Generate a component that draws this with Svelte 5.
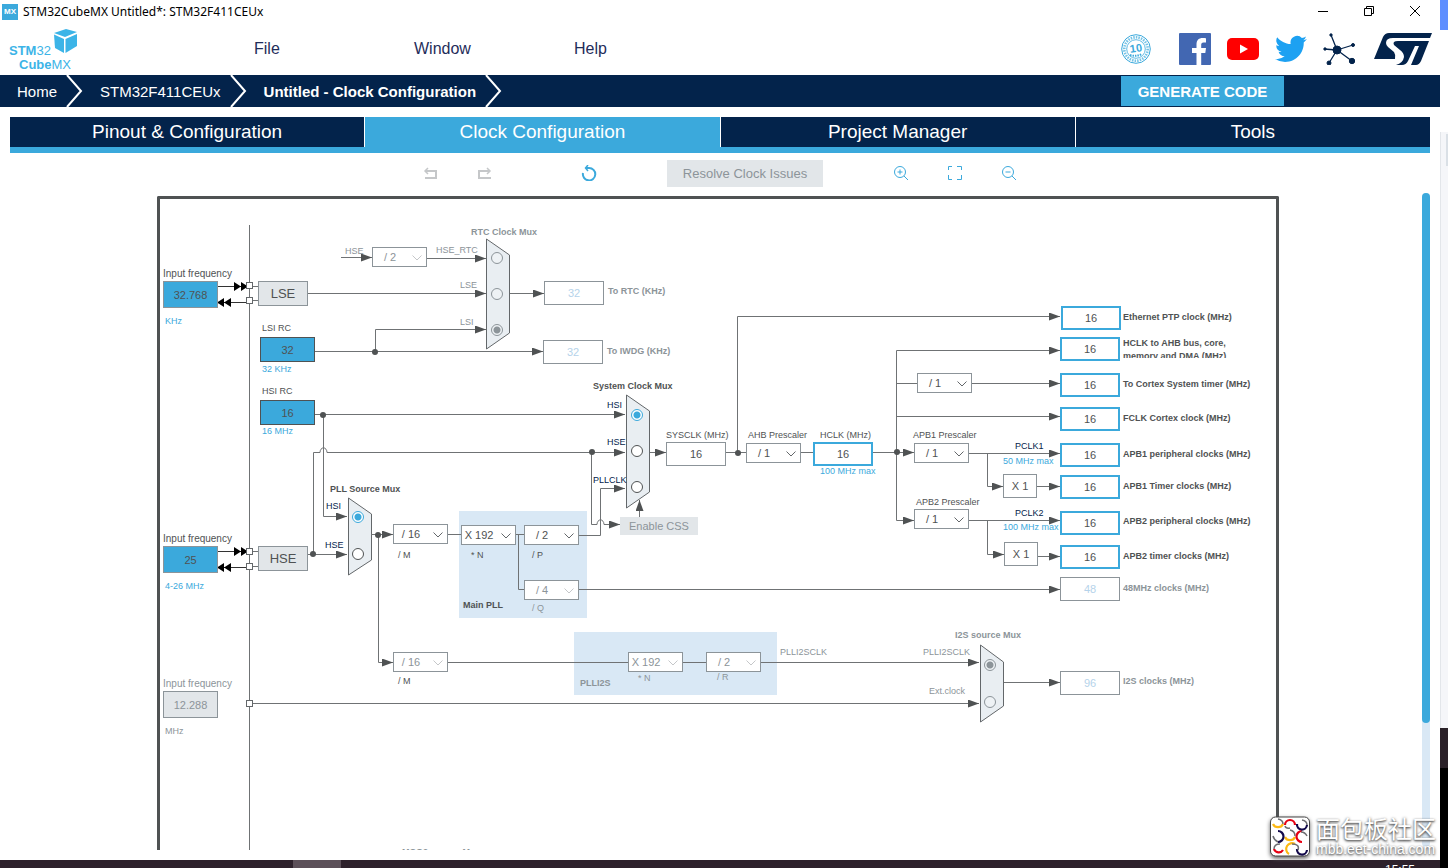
<script>
    let tabs = ["Pinout & Configuration", "Clock Configuration", "Project Manager", "Tools"]
    let activeTab = "Clock Configuration"

    // canvas coordinates of the board's top left corner
    const originX = 160
    const originY = 199

    function place(x, y) {
        return `left:${x - originX}px; top:${y - originY}px;`
    }

    let wires = [
        "M249.5 225V1000",
        "M427 258.5H486>", "M341 257.5H372>", "M308 293.5H486>", "M315 351.5H543>", "M375.5 352V329.5H486>",
        "M510 293.5H544>",
        "M315 414.5H625>", "M323.5 415V516.5H347>", "M308 554.5H347>",
        "M313.5 554V452.5H320a3 4 0 0 1 7 0H625>",
        "M591.5 452V524.5H597a3 4 0 0 1 7 0H620>",
        "M579 535.5H600.5V488.5H625>",
        "M650 452.5H666>", "M639.5 517V500>",
        "M726 452.5H746", "M737.5 452V316.5H1060>",
        "M801 452.5H813", "M873 452.5H914>",
        "M896.5 452V350.5H1060>", "M897 383.5H917", "M972 383.5H1060>", "M897 416.5H1060>", "M896.5 452V520.5H914>",
        "M969 453.5H1060>", "M987.5 453V486.5H1003>", "M1037 486.5H1060>",
        "M969 520.5H1060>", "M987.5 520V554.5H1004>", "M1038 556.5H1060>",
        "M371 534.5H393>", "M378.5 534V662.5H393>",
        "M448 534.5H461", "M516 534.5H524", "M518.5 534V589.5H524", "M579 589.5H1060>",
        "M448 662.5H628", "M683 662.5H706", "M761 662.5H979>", "M250 703.5H979>", "M1004 682.5H1060>",
        "M250 286.5H258", "M250 300.5H258", "M250 551.5H258", "M250 566.5H258"
    ]

    let dots = [[375, 352], [323, 415], [313, 554], [592, 452], [738, 453], [897, 452], [378, 535]]
    let ports = [285, 300, 551, 566, 703]

    let muxes = [
        {name: "RTC Clock Mux", points: "486.5,239 509.5,255 509.5,333 486.5,349", x: 497, off: true, checked: 2, inputs: [["HSE_RTC", 258], ["LSE", 294], ["LSI", 330]]},
        {name: "System Clock Mux", points: "626.5,395 649.5,411 649.5,492 626.5,508", x: 637, checked: 0, inputs: [["HSI", 415], ["HSE", 451], ["PLLCLK", 487]]},
        {name: "PLL Source Mux", points: "348.5,498 371.5,514 371.5,560 348.5,575", x: 358, checked: 0, inputs: [["HSI", 517], ["HSE", 554]]},
        {name: "I2S source Mux", points: "980.5,645 1003.5,662 1003.5,706 980.5,722", x: 990, off: true, checked: 0, inputs: [["PLLI2SCLK", 665], ["Ext.clock", 702]]}
    ]

    let fields = [
        {id: "lse-in", x: 163, y: 281, value: "32.768", kind: "source"},
        {id: "hse-in", x: 163, y: 546, value: "25", kind: "source"},
        {id: "i2s-in", x: 163, y: 691, value: "12.288", kind: "source off"},
        {id: "lsi-rc", x: 260, y: 337, value: "32", kind: "rc"},
        {id: "hsi-rc", x: 260, y: 400, value: "16", kind: "rc"},
        {id: "rtc", x: 544, y: 281, value: "32", kind: "off"},
        {id: "iwdg", x: 543, y: 340, value: "32", kind: "off"},
        {id: "sysclk", x: 666, y: 442, value: "16", kind: "plain"},
        {id: "hclk", x: 813, y: 442, value: "16", kind: "active"},
        {id: "ptp", x: 1061, y: 306, value: "16", kind: "active"},
        {id: "ahb", x: 1060, y: 337, value: "16", kind: "active"},
        {id: "cortex", x: 1060, y: 373, value: "16", kind: "active"},
        {id: "fclk", x: 1060, y: 407, value: "16", kind: "active"},
        {id: "apb1", x: 1060, y: 443, value: "16", kind: "active"},
        {id: "apb1-timer", x: 1060, y: 475, value: "16", kind: "active"},
        {id: "apb2", x: 1060, y: 511, value: "16", kind: "active"},
        {id: "apb2-timer", x: 1060, y: 545, value: "16", kind: "active"},
        {id: "usb", x: 1060, y: 577, value: "48", kind: "off"},
        {id: "i2s", x: 1060, y: 671, value: "96", kind: "off"}
    ]

    let selects = [
        {id: "rtc-div", x: 372, y: 247, value: "/ 2", off: true},
        {id: "pll-m", x: 393, y: 524, value: "/ 16"},
        {id: "i2s-m", x: 393, y: 652, value: "/ 16", off: true},
        {id: "pll-n", x: 461, y: 525, value: "X 192"},
        {id: "pll-p", x: 524, y: 525, value: "/ 2"},
        {id: "pll-q", x: 524, y: 580, value: "/ 4", off: true},
        {id: "i2s-n", x: 628, y: 652, value: "X 192", off: true},
        {id: "i2s-r", x: 706, y: 652, value: "/ 2", off: true},
        {id: "ahb-div", x: 746, y: 443, value: "/ 1"},
        {id: "cortex-div", x: 917, y: 373, value: "/ 1"},
        {id: "apb1-div", x: 914, y: 443, value: "/ 1"},
        {id: "apb2-div", x: 914, y: 509, value: "/ 1"}
    ]

    // y is the middle of the first line
    let labels = [
        {x: 163, y: 274, text: "Input frequency", for: "lse-in", kind: "big"},
        {x: 163, y: 539, text: "Input frequency", for: "hse-in", kind: "big"},
        {x: 163, y: 684, text: "Input frequency", for: "i2s-in", kind: "big gray"},
        {x: 165, y: 321, text: "KHz", kind: "blue"},
        {x: 165, y: 586, text: "4-26 MHz", kind: "blue"},
        {x: 165, y: 731, text: "MHz", kind: "gray"},
        {x: 262, y: 328, text: "LSI RC", for: "lsi-rc"},
        {x: 262, y: 369, text: "32 KHz", kind: "blue"},
        {x: 262, y: 391, text: "HSI RC", for: "hsi-rc"},
        {x: 262, y: 431, text: "16 MHz", kind: "blue"},
        {x: 345, y: 251, text: "HSE", for: "rtc-div", kind: "gray"},
        {x: 436, y: 250, text: "HSE_RTC", for: "mux0-0", kind: "gray"},
        {x: 460, y: 285, text: "LSE", for: "mux0-1", kind: "gray"},
        {x: 460, y: 322, text: "LSI", for: "mux0-2", kind: "gray"},
        {x: 471, y: 232, text: "RTC Clock Mux", kind: "bold gray"},
        {x: 608, y: 291, text: "To RTC (KHz)", for: "rtc", kind: "bold gray"},
        {x: 607, y: 351, text: "To IWDG (KHz)", for: "iwdg", kind: "bold gray"},
        {x: 593, y: 386, text: "System Clock Mux", kind: "bold"},
        {x: 607, y: 405, text: "HSI", for: "mux1-0", kind: "navy"},
        {x: 607, y: 442, text: "HSE", for: "mux1-1", kind: "navy"},
        {x: 593, y: 480, text: "PLLCLK", for: "mux1-2", kind: "navy"},
        {x: 666, y: 435, text: "SYSCLK (MHz)", for: "sysclk"},
        {x: 748, y: 435, text: "AHB Prescaler", for: "ahb-div"},
        {x: 820, y: 435, text: "HCLK (MHz)", for: "hclk"},
        {x: 820, y: 471, text: "100 MHz max", kind: "blue"},
        {x: 913, y: 435, text: "APB1 Prescaler", for: "apb1-div"},
        {x: 916, y: 502, text: "APB2 Prescaler", for: "apb2-div"},
        {x: 1015, y: 446, text: "PCLK1", kind: "navy"},
        {x: 1003, y: 461, text: "50 MHz max", kind: "blue"},
        {x: 1015, y: 513, text: "PCLK2", kind: "navy"},
        {x: 1003, y: 527, text: "100 MHz max", kind: "blue"},
        {x: 330, y: 489, text: "PLL Source Mux", kind: "bold"},
        {x: 326, y: 506, text: "HSI", for: "mux2-0", kind: "navy"},
        {x: 325, y: 545, text: "HSE", for: "mux2-1", kind: "navy"},
        {x: 398, y: 555, text: "/ M", for: "pll-m"},
        {x: 398, y: 681, text: "/ M", for: "i2s-m"},
        {x: 471, y: 555, text: "* N", for: "pll-n"},
        {x: 532, y: 555, text: "/ P", for: "pll-p"},
        {x: 532, y: 608, text: "/ Q", for: "pll-q", kind: "gray"},
        {x: 463, y: 605, text: "Main PLL", kind: "bold"},
        {x: 580, y: 683, text: "PLLI2S", kind: "bold gray"},
        {x: 638, y: 678, text: "* N", for: "i2s-n", kind: "gray"},
        {x: 717, y: 677, text: "/ R", for: "i2s-r", kind: "gray"},
        {x: 780, y: 652, text: "PLLI2SCLK", kind: "gray"},
        {x: 923, y: 652, text: "PLLI2SCLK", for: "mux3-0", kind: "gray"},
        {x: 929, y: 691, text: "Ext.clock", for: "mux3-1", kind: "gray"},
        {x: 955, y: 635, text: "I2S source Mux", kind: "bold gray"},
        {x: 1123, y: 317, text: "Ethernet PTP clock (MHz)", for: "ptp", kind: "bold"},
        {x: 1123, y: 343, text: "HCLK to AHB bus, core, memory and DMA (MHz)", for: "ahb", kind: "bold wrap"},
        {x: 1123, y: 384, text: "To Cortex System timer (MHz)", for: "cortex", kind: "bold"},
        {x: 1123, y: 418, text: "FCLK Cortex clock (MHz)", for: "fclk", kind: "bold"},
        {x: 1123, y: 454, text: "APB1 peripheral clocks (MHz)", for: "apb1", kind: "bold"},
        {x: 1123, y: 486, text: "APB1 Timer clocks (MHz)", for: "apb1-timer", kind: "bold"},
        {x: 1123, y: 521, text: "APB2 peripheral clocks (MHz)", for: "apb2", kind: "bold"},
        {x: 1123, y: 556, text: "APB2 timer clocks (MHz)", for: "apb2-timer", kind: "bold"},
        {x: 1123, y: 588, text: "48MHz clocks (MHz)", for: "usb", kind: "bold gray"},
        {x: 1123, y: 681, text: "I2S clocks (MHz)", for: "i2s", kind: "bold gray"},
        {x: 402, y: 852, text: "MCO2 source Mux", kind: "bold gray"}
    ]
</script>

<div class="desktop">
    <div class="window">
        <header>
            <div class="titlebar">
                <span class="mx">MX</span>
                <span class="title">STM32CubeMX Untitled*: STM32F411CEUx</span>
                <button class="win" aria-label="Minimize">
                    <svg width="12" height="12"><path d="M1 5.5H11" stroke="#000"/></svg>
                </button>
                <button class="win" aria-label="Restore">
                    <svg width="12" height="12" fill="none" stroke="#000"><path d="M1.5 2.5H8.5V9.5H1.5ZM3.5 2V0.5H10.5V7.5H9"/></svg>
                </button>
                <button class="win" aria-label="Close">
                    <svg width="12" height="12"><path d="M1 0L11 10M11 0L1 10" stroke="#000"/></svg>
                </button>
            </div>

            <div class="brand">
                <svg class="logo" width="72" height="44" viewBox="0 0 72 44">
                    <path d="M46 6L58 2L69 5L57 10Z" fill="#3cb4e7"/>
                    <path d="M46 7.500L56 12V26L47 21Z" fill="#3cb4e7"/>
                    <path d="M57.500 12L69 7V19L57.500 26Z" fill="#3cb4e7"/>
                    <text x="1" y="28"><tspan class="strong">STM</tspan>32</text>
                    <text x="11" y="42"><tspan class="strong">Cube</tspan>MX</text>
                </svg>
                <nav class="menu">
                    <button>File</button>
                    <button>Window</button>
                    <button>Help</button>
                </nav>
                <div class="social">
                    <a href="#years" class="years" aria-label="10 years">
                        <svg width="30" height="30" viewBox="0 0 30 30" fill="none" stroke="#3ba9dc">
                            <circle cx="15" cy="15" r="14.300"/>
                            <circle cx="15" cy="15" r="11.700" stroke-width="2.600" stroke-dasharray="1.500 1.100" opacity="0.700"/>
                            <circle cx="15" cy="15" r="9.300" stroke-width="0.800"/>
                            <text x="15" y="18" text-anchor="middle" class="ten" transform="rotate(-8 15 15)">10</text>
                            <path d="M9 21Q15 23 21 20" stroke-width="2" stroke-dasharray="1.500 1"/>
                        </svg>
                    </a>
                    <a href="#facebook" aria-label="Facebook">
                        <svg width="32" height="32" viewBox="0 0 32 32">
                            <rect width="32" height="32" rx="1" fill="#4267b2"/>
                            <path d="M17.500 32V20H13V15H17.500V11.500C17.500 7 20 5 23.500 5C25 5 26.500 5.100 27 5.200V9.500H24.500C22.700 9.500 22.200 10.500 22.200 12V15H27L26.300 20H22.200V32Z" fill="#fff"/>
                        </svg>
                    </a>
                    <a href="#youtube" aria-label="YouTube">
                        <svg width="32" height="32" viewBox="0 0 32 32">
                            <rect y="5" width="32" height="22" rx="5" fill="#f00"/>
                            <path d="M13 11.500L21 16L13 20.500Z" fill="#fff"/>
                        </svg>
                    </a>
                    <a href="#twitter" aria-label="Twitter">
                        <svg width="32" height="32" viewBox="0 0 24 24">
                            <path fill="#1da1f2" d="M23.950 4.570a10 10 0 0 1-2.820.780 4.960 4.960 0 0 0 2.160-2.730c-.950.560-2 .960-3.130 1.190a4.920 4.920 0 0 0-8.380 4.480C7.690 8.090 4.070 6.130 1.640 3.160a4.920 4.920 0 0 0 1.520 6.570 4.900 4.900 0 0 1-2.230-.610v.060a4.920 4.920 0 0 0 3.950 4.830 5 5 0 0 1-2.210.080 4.940 4.940 0 0 0 4.600 3.420A9.870 9.870 0 0 1 0 19.540a13.990 13.990 0 0 0 7.550 2.210c9.050 0 14-7.500 14-13.980 0-.210 0-.420-.010-.630a10 10 0 0 0 2.410-2.570z"/>
                        </svg>
                    </a>
                    <a href="#community" aria-label="Community">
                        <svg width="32" height="32" viewBox="0 0 32 32" fill="#03234b" stroke="#03234b">
                            <path d="M14 17L8 2M14 17L30 12M14 17L1 16M14 17L6 30M14 17L29 28" stroke-width="1.300"/>
                            <circle cx="14" cy="17" r="4"/>
                            <circle cx="8" cy="2" r="1.200"/>
                            <circle cx="30" cy="12" r="1.500"/>
                            <circle cx="2" cy="16" r="1.200"/>
                            <circle cx="6" cy="30" r="2"/>
                            <circle cx="29" cy="28" r="2.700"/>
                        </svg>
                    </a>
                    <a href="#st" class="st" aria-label="ST">
                        <svg width="58" height="32" viewBox="0 0 58 32" fill="#03234b">
                            <path d="M0 26L9 4Q11 0 15 0H58L56 5H19Q12 5 12 10Q12 12 14 14L20 19Q22 22 21 26Z"/>
                            <path d="M24 8H55L47 28Q45 32 42 32H37L45 13H41L34 28Q32 32 28 32H22Q29 30 30 24Q30 20 26 17L20 12Q18 8 24 8Z"/>
                        </svg>
                    </a>
                </div>
            </div>
        </header>

        <nav class="crumbs">
            <a href="#home">Home</a>
            <svg width="17" height="32"><path d="M1 0L15 16L1 32" fill="none" stroke="#fff" stroke-width="2"/></svg>
            <a href="#chip">STM32F411CEUx</a>
            <svg width="17" height="32"><path d="M1 0L15 16L1 32" fill="none" stroke="#fff" stroke-width="2"/></svg>
            <a href="#clock" class="current">Untitled - Clock Configuration</a>
            <svg width="17" height="32"><path d="M1 0L15 16L1 32" fill="none" stroke="#fff" stroke-width="2"/></svg>
            <button class="generate">GENERATE CODE</button>
        </nav>

        <div class="tabs">
            {#each tabs as tab}
                <button class:active={tab == activeTab} on:click={() => activeTab = tab}>{tab}</button>
            {/each}
        </div>

        <div class="toolbar">
            <div class="group">
                <button aria-label="Undo">
                    <svg width="16" height="16" fill="none" stroke="#c5c7c9" stroke-width="2"><path d="M2 6H13V13H2"/><path d="M5 3L2 6L5 9" stroke-width="1.500"/></svg>
                </button>
                <button aria-label="Redo">
                    <svg width="16" height="16" fill="none" stroke="#c5c7c9" stroke-width="2"><path d="M13 6H2V13H14"/><path d="M10 3L13 6L10 9" stroke-width="1.500"/></svg>
                </button>
            </div>
            <button aria-label="Reset">
                <svg width="16" height="16" fill="none" stroke="#3ba9dc" stroke-width="2"><path d="M2 8A6.200 6.200 0 1 0 8 3H5"/><path d="M7 0L4.500 3L7 6" stroke-width="1.500"/></svg>
            </button>
            <button class="resolve" disabled>Resolve Clock Issues</button>
            <div class="group">
                <button aria-label="Zoom in">
                    <svg width="16" height="16" fill="none" stroke="#3ba9dc"><circle cx="7" cy="7" r="5.500"/><path d="M11 11L15 15M4.500 7H9.500M7 4.500V9.500"/></svg>
                </button>
                <button aria-label="Fit to screen">
                    <svg width="16" height="16" fill="none" stroke="#3ba9dc"><path d="M1.500 5V1.500H5M10 1.500H14.500V5M14.500 10V14.500H10M5 14.500H1.500V10"/></svg>
                </button>
                <button aria-label="Zoom out">
                    <svg width="16" height="16" fill="none" stroke="#3ba9dc"><circle cx="7" cy="7" r="5.500"/><path d="M11 11L15 15M4.500 7H9.500"/></svg>
                </button>
            </div>
        </div>

        <div class="workspace">
            <div class="view">
                <div class="board">
                    <div class="area" style="{place(459, 511)} width:128px; height:107px;"></div>
                    <div class="area" style="{place(574, 632)} width:203px; height:63px;"></div>

                    <svg class="drawing" width="1116" height="801" viewBox="{originX} {originY} 1116 801">
                        <defs>
                            <marker id="arrow" markerUnits="userSpaceOnUse" markerWidth="11" markerHeight="8" refX="11" refY="4" orient="auto">
                                <path d="M0 0L11 4L0 8Z" fill="#4f5253"/>
                            </marker>
                        </defs>
                        {#each muxes as mux}
                            <polygon points={mux.points} fill="#e9eef2" stroke="#63676a"/>
                        {/each}
                        {#each wires as wire}
                            <path class="wire" d={wire.replace(">", "")} marker-end={wire.endsWith(">") ? "url(#arrow)" : null}/>
                        {/each}
                        {#each dots as [x, y]}
                            <circle cx={x} cy={y} r="3" fill="#4f5253"/>
                        {/each}
                        {#each [286, 551] as y}
                            <path d="M218 {y + 0.5}H249M218 {y + 16.5}H249" stroke="#333"/>
                            <path d="M234 {y - 4}L241 {y + 0.5}L234 {y + 5}ZM241 {y - 4}L248 {y + 0.5}L241 {y + 5}Z"/>
                            <path d="M231 {y + 12}L224 {y + 16.5}L231 {y + 21}ZM224 {y + 12}L217 {y + 16.5}L224 {y + 21}Z"/>
                        {/each}
                        {#each ports as y}
                            <rect x="246.500" y={y - 2.5} width="6" height="6" fill="#fff" stroke="#63676a"/>
                        {/each}
                    </svg>

                    {#each fields as field}
                        <input id={field.id} class="field {field.kind}" style={place(field.x, field.y)} value={field.value} disabled={field.kind.includes("off")}>
                    {/each}

                    {#each selects as select}
                        <div class="select" class:off={select.off} style={place(select.x, select.y)}>
                            <select id={select.id} aria-label={select.id} disabled={select.off}>
                                <option>{select.value}</option>
                            </select>
                            <svg width="10" height="6" fill="none"><path d="M0.500 0.500L5 5L9.500 0.500"/></svg>
                        </div>
                    {/each}

                    {#each muxes as mux, m}
                        {#each mux.inputs as [name, y], i}
                            <input type="radio" id="mux{m}-{i}" name={mux.name} aria-label={name} checked={i == mux.checked} disabled={mux.off} style={place(mux.x - 6, y - 6)}>
                        {/each}
                    {/each}

                    {#each labels as label}
                        {#if label.for}
                            <label for={label.for} class="label {label.kind}" style={place(label.x, label.y - 6)}>{label.text}</label>
                        {:else}
                            <span class="label {label.kind}" style={place(label.x, label.y - 6)}>{label.text}</span>
                        {/if}
                    {/each}

                    <button class="osc" style={place(258, 281)}>LSE</button>
                    <button class="osc" style={place(258, 546)}>HSE</button>
                    <button class="css" style={place(620, 517)} disabled>Enable CSS</button>
                    <span class="factor" style={place(1003, 474)}>X 1</span>
                    <span class="factor" style={place(1004, 542)}>X 1</span>
                </div>
            </div>
            <div class="scroll"><div class="thumb"></div></div>
        </div>
    </div>

    <div class="behind">
        <div class="accent"></div>
        <div class="page"></div>
        <div class="panel"><div class="handle"></div></div>
        <div class="dark"></div>
    </div>

    <div class="taskbar">
        <div class="task"></div>
        <span class="time">15:55</span>
    </div>

    <div class="watermark">
        <svg width="40" height="42" viewBox="0 0 40 42" fill="none" stroke-width="2.200">
            <rect x="0.500" y="1" width="39" height="39" rx="5" fill="#fff" stroke="#444" stroke-width="1"/>
            <path d="M3 8A5.500 5.500 0 0 0 13 8M15 21A5.500 5.500 0 0 0 25 21M25 28A5.500 5.500 0 0 0 19 38" stroke="#fdb813"/>
            <path d="M15 9A5 5 0 0 1 25 9M32 15A5.500 5.500 0 0 0 32 26M4 33A5 5 0 0 0 13 34" stroke="#e60012"/>
            <path d="M27 8A5 5 0 0 0 37 9M8 15A5.500 5.500 0 0 1 8 26M27 33A5 5 0 0 0 37 34" stroke="#130a4b"/>
            <path d="M8 3Q13 4 13 8M15 10Q16 13 20 12M32 4Q37 5 37 9M3 20Q4 24 8 26M20 14Q25 15 25 20M37 20Q35 16 31 16M4 33Q4 28 10 28M22 28Q30 28 28 34" stroke="#6d6e71" stroke-width="1.500"/>
        </svg>
        <div class="words">
            <span class="name">面包板社区</span>
            <span class="site">mbb.eet-china.com</span>
        </div>
    </div>
</div>

<style>
    :global(body) {
        font-family: "Liberation Sans", Arial, sans-serif;
        background-color: white;
    }

    button, input, select {
        box-sizing: border-box;
        margin: 0;
        padding: 0;
        border: none;
        border-radius: 0;
        background: none;
        font-family: inherit;
    }

    a {
        color: inherit;
        text-decoration: none;
    }

    svg {
        display: block;
    }

    .desktop {
        position: relative;
        display: grid;
        grid-template-columns: 1fr 8px;
        grid-template-rows: 1fr 8px;
        height: 100vh;
        overflow: hidden;
    }

    .window {
        display: flex;
        flex-direction: column;
        min-width: 0;
        min-height: 0;
        padding-bottom: 10px;
        box-sizing: border-box;
    }

    .titlebar {
        display: flex;
        align-items: center;
        height: 23px;
        padding-right: 9px;
    }

    .mx {
        width: 16px;
        margin: 0 5px 0 2px;
        line-height: 16px;
        text-align: center;
        font-size: 8px;
        font-weight: bold;
        color: white;
        background-color: #3ba9dc;
    }

    .title {
        flex: 1;
        font-family: "Noto Sans", "Open Sans", sans-serif;
        font-size: 12px;
    }

    .win {
        display: flex;
        justify-content: center;
        width: 32px;
        margin-left: 14px;
    }

    .brand {
        display: flex;
        align-items: center;
        height: 52px;
        padding: 0 8px;
    }

    .logo {
        flex: none;
        margin-right: 174px;
        fill: #3cb4e7;
        font-size: 13px;
    }

    .strong {
        font-weight: bold;
    }

    .menu {
        display: flex;
        flex: 1;
    }

    .menu button {
        width: 160px;
        text-align: left;
        font-size: 16px;
        color: #1f2d5a;
    }

    .social {
        display: flex;
        align-items: center;
        gap: 16px;
    }

    .years {
        margin-right: 12px;
    }

    .ten {
        font-size: 11px;
        font-weight: bold;
        fill: #3ba9dc;
        stroke: none;
    }

    .st {
        margin-left: 3px;
    }

    .crumbs {
        display: flex;
        align-items: center;
        height: 32px;
        padding: 0 156px 0 17px;
        font-size: 15px;
        color: white;
        background-color: #03234b;
    }

    .crumbs svg {
        margin: 0 17px 0 9px;
    }

    .current {
        font-weight: bold;
    }

    .generate {
        width: 163px;
        height: 30px;
        margin-left: auto;
        font-size: 15px;
        font-weight: bold;
        color: white;
        background-color: #3ba9dc;
    }

    .tabs {
        display: grid;
        grid-template-columns: repeat(4, 1fr);
        column-gap: 1px;
        margin: 10px 10px 0;
        border-bottom: 6px solid #3ba9dc;
    }

    .tabs button {
        height: 30px;
        font-size: 19px;
        color: white;
        background-color: #03234b;
    }

    .tabs .active {
        background-color: #3ba9dc;
    }

    .toolbar {
        display: flex;
        flex: none;
        align-items: center;
        justify-content: center;
        gap: 70px;
        height: 40px;
    }

    .group {
        display: flex;
        gap: 38px;
    }

    .group:first-child {
        margin-right: 18px;
    }

    .resolve {
        width: 156px;
        height: 27px;
        font-size: 13px;
        color: #8c9499;
        background-color: #e2e6e9;
    }

    .workspace {
        display: flex;
        flex: 1;
        min-height: 0;
        margin: 0 10px 0 14px;
    }

    .view {
        display: flex;
        flex: 1;
        justify-content: center;
        min-width: 0;
        padding-top: 3px;
        overflow: hidden;
    }

    .board {
        position: relative;
        flex: none;
        width: 1116px;
        border: 3px solid #4f5253;
        border-bottom: none;
        border-radius: 2px 2px 0 0;
        overflow: hidden;
    }

    .scroll {
        width: 8px;
        margin-bottom: 3px;
        border-radius: 4px;
        background-color: #d9e8f5;
    }

    .thumb {
        height: 81%;
        border-radius: 4px;
        background-color: #3ba9dc;
    }

    /* everything on the board sits on a free canvas */
    .area, .drawing, .field, .select, .board input, .label, .osc, .css, .factor {
        position: absolute;
    }

    .area {
        background-color: #d9e8f5;
    }

    .drawing {
        left: 0;
        top: 0;
    }

    .wire {
        fill: none;
        stroke: #6f7274;
    }

    .field {
        width: 60px;
        height: 24px;
        border: 1px solid #8c9499;
        text-align: center;
        font-size: 11px;
        color: #4f5253;
        background-color: white;
    }

    .active.field {
        border: 2px solid #3ba9dc;
    }

    .off.field {
        color: #b5d3ea;
    }

    .source.field {
        width: 55px;
        height: 27px;
        background-color: #3ba9dc;
    }

    .source.off.field {
        color: #8c9499;
        background-color: #e2e6e9;
    }

    .rc.field {
        width: 55px;
        height: 25px;
        border-color: #4f5253;
        background-color: #3ba9dc;
    }

    .select select {
        display: block;
        width: 55px;
        height: 20px;
        padding-right: 19px;
        border: 1px solid #8c9499;
        appearance: none;
        text-align: center;
        text-align-last: center;
        font-size: 11px;
        color: #4f5253;
        background-color: white;
        opacity: 1;
    }

    .select svg {
        position: absolute;
        top: 8px;
        right: 5px;
        stroke: #63676a;
        pointer-events: none;
    }

    .select.off select {
        color: #8c9499;
    }

    .select.off svg {
        stroke: #c5c7c9;
    }

    input[type="radio"] {
        width: 12px;
        height: 12px;
        border: 1px solid #4f5253;
        border-radius: 50%;
        appearance: none;
        background-color: white;
    }

    input[type="radio"]:checked {
        border-color: #3ba9dc;
        background: radial-gradient(circle, #3ba9dc 3px, white 4px);
    }

    input[type="radio"]:disabled {
        border-color: #8c9499;
        background: #eef2f5;
    }

    input[type="radio"]:checked:disabled {
        background: radial-gradient(circle, #8c9499 3px, #eef2f5 4px);
    }

    .label {
        font-size: 9px;
        line-height: 12px;
        white-space: nowrap;
        color: #4f5253;
    }

    .big {
        font-size: 10px;
    }

    .bold {
        font-weight: bold;
    }

    .gray {
        color: #8c9499;
    }

    .blue {
        color: #3ba9dc;
    }

    .navy {
        color: #03234b;
    }

    .wrap {
        width: 120px;
        height: 21px;
        line-height: 13px;
        white-space: normal;
        overflow: hidden;
    }

    .osc {
        width: 50px;
        height: 25px;
        border: 1px solid #8c9499;
        font-size: 13px;
        color: #4f5253;
        background-color: #e2e6e9;
    }

    .css {
        width: 78px;
        height: 18px;
        font-size: 11px;
        color: #8c9499;
        background-color: #e2e6e9;
    }

    .factor {
        box-sizing: border-box;
        width: 34px;
        height: 24px;
        border: 1px solid #8c9499;
        text-align: center;
        font-size: 11px;
        line-height: 22px;
        color: #4f5253;
        background-color: white;
    }

    .behind {
        display: flex;
        grid-column: 2;
        grid-row: 1 / 3;
        flex-direction: column;
    }

    .accent {
        height: 30px;
        background-color: #5f8fff;
    }

    .page {
        height: 102px;
    }

    .panel {
        flex: 1;
        border-left: 1px solid #e3e6ea;
        background-color: #f5f6f9;
    }

    .handle {
        width: 2px;
        height: 32px;
        margin: 2px 0 0 auto;
        background-color: #dae0e6;
    }

    .dark {
        height: 100px;
        border-top: 40px solid #2a2128;
        background-color: black;
    }

    .taskbar {
        display: flex;
        grid-column: 1;
        grid-row: 2;
        justify-content: space-between;
        padding: 0 25px 0 293px;
        overflow: hidden;
        background-color: #2d212b;
    }

    .task {
        width: 48px;
        background-color: #5c5059;
    }

    .time {
        margin-top: 3px;
        font-size: 12px;
        color: white;
    }

    .watermark {
        position: absolute;
        right: 12px;
        bottom: 10px;
        display: flex;
        gap: 6px;
    }

    .watermark svg {
        margin-top: 1px;
        filter: drop-shadow(0 2px 2px #666);
    }

    .words {
        display: flex;
        flex-direction: column;
        color: white;
        text-shadow: 0 1px 3px #555, 0 1px 2px #777;
    }

    .name {
        font-family: "Noto Sans CJK SC", sans-serif;
        font-size: 24px;
        line-height: 26px;
    }

    .site {
        font-size: 14px;
        line-height: 16px;
    }
</style>
